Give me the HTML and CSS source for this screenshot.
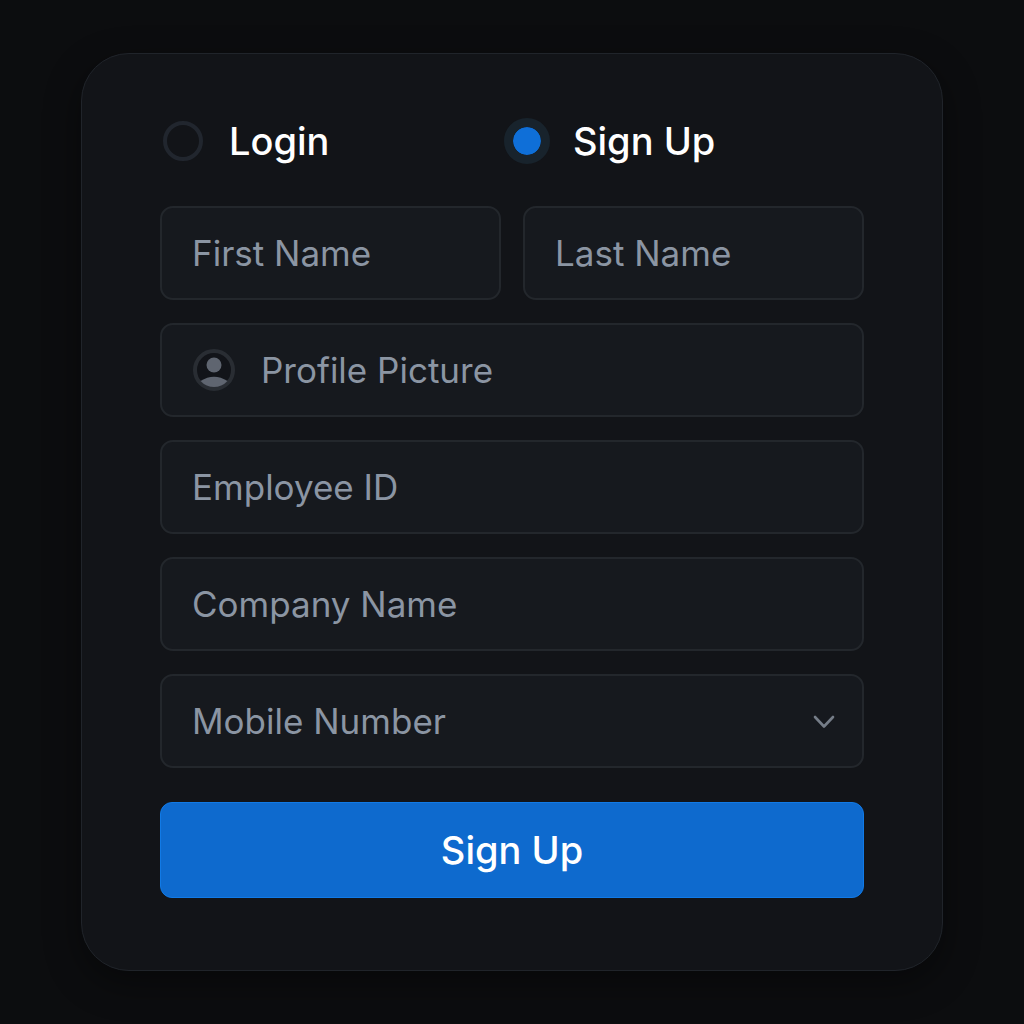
FILE: index.html
```html
<!DOCTYPE html>
<html lang="en">
<head>
  <meta charset="utf-8">
  <meta name="viewport" content="width=device-width, initial-scale=1">
  <title>Sign Up</title>
  <link rel="stylesheet" href="styles.css">
</head>
<body>
  <main class="card">
    <form class="form">
      <div class="modes" role="radiogroup" aria-label="Account mode">
        <label class="mode"><input class="mode-radio" type="radio" name="mode" value="login"><span>Login</span></label>
        <label class="mode"><input class="mode-radio" type="radio" name="mode" value="signup" checked><span>Sign Up</span></label>
      </div>
      <div class="fields">
        <div class="names">
          <input class="field" type="text" name="first" placeholder="First Name" aria-label="First Name">
          <input class="field" type="text" name="last" placeholder="Last Name" aria-label="Last Name">
        </div>
        <label class="field upload">
          <svg class="avatar" viewBox="0 0 44 44" aria-hidden="true">
            <circle cx="22" cy="22" r="19" fill="#121419" stroke="#292d33" stroke-width="4"/>
            <circle cx="22" cy="17" r="7.500" fill="#5f6570"/>
            <path d="M8.500 33 Q22 24.500 35.500 33 Q30 39 22 39 Q14 39 8.500 33Z" fill="#5f6570"/>
          </svg>
          <span>Profile Picture</span>
          <input class="upload-input" type="file" name="picture" accept="image/*">
        </label>
        <input class="field" type="text" name="employee" placeholder="Employee ID" aria-label="Employee ID">
        <input class="field" type="text" name="company" placeholder="Company Name" aria-label="Company Name">
        <div class="select">
          <select class="field" name="mobile" aria-label="Mobile Number"><option>Mobile Number</option></select>
          <svg class="chevron" viewBox="0 0 24 16" aria-hidden="true">
            <path d="M3 3 L12 12.500 L21 3" fill="none" stroke="#757d88" stroke-width="2.600" stroke-linecap="round" stroke-linejoin="round"/>
          </svg>
        </div>
      </div>
      <button class="submit" type="submit">Sign Up</button>
    </form>
  </main>
</body>
</html>
```
FILE: styles.css
```css
* {
  box-sizing: border-box;
}

body {
  margin: 0;
  padding: 53px 81px;
  background: #0c0d0f;
  color: #ffffff;
  font-family: Inter, "Liberation Sans", sans-serif;
}

.card {
  max-width: 862px;
  margin: 0 auto;
  padding: 64px 78px 72px;
  border: 1px solid #20242a;
  border-radius: 48px;
  background: #121418;
  box-shadow: 0 12px 36px rgba(0, 0, 0, 0.4);
}

.modes {
  display: grid;
  grid-template-columns: 344fr 360fr;
  margin-bottom: 42px;
}

.mode {
  display: flex;
  align-items: center;
  gap: 23px;
  font-size: 38px;
  font-weight: 500;
  line-height: 46px;
}

.mode-radio {
  appearance: none;
  flex: none;
  width: 40px;
  height: 40px;
  margin: 3px;
  border: 4px solid #21262e;
  border-radius: 50%;
}

.mode-radio:checked {
  width: 46px;
  height: 46px;
  margin: 0;
  border: 9px solid #18232c;
  background: #0f6fd8;
  background-clip: padding-box;
}

.fields {
  display: grid;
  gap: 23px;
}

.names {
  display: grid;
  grid-template-columns: 1fr 1fr;
  gap: 22px;
}

.field {
  appearance: none;
  width: 100%;
  min-width: 0;
  height: 94px;
  padding: 0 30px;
  border: 2px solid #23272c;
  border-radius: 13px;
  background: #16191e;
  color: #8b95a3;
  font-family: inherit;
  font-size: 35px;
  font-weight: 400;
}

.field::placeholder {
  color: #8b95a3;
  opacity: 1;
}

.upload {
  display: flex;
  align-items: center;
  gap: 25px;
}

.avatar {
  width: 44px;
  height: 44px;
}

.upload-input {
  position: absolute;
  width: 1px;
  height: 1px;
  opacity: 0;
}

.select {
  position: relative;
}

.select .field {
  display: block;
}

.chevron {
  position: absolute;
  top: 40px;
  right: 28px;
  width: 24px;
  height: 16px;
  pointer-events: none;
}

.submit {
  display: block;
  width: 100%;
  height: 96px;
  margin-top: 34px;
  border: 1px solid #117ae6;
  border-radius: 12px;
  background: #0e6ace;
  color: #ffffff;
  font-family: inherit;
  font-size: 38px;
  font-weight: 500;
}
```
